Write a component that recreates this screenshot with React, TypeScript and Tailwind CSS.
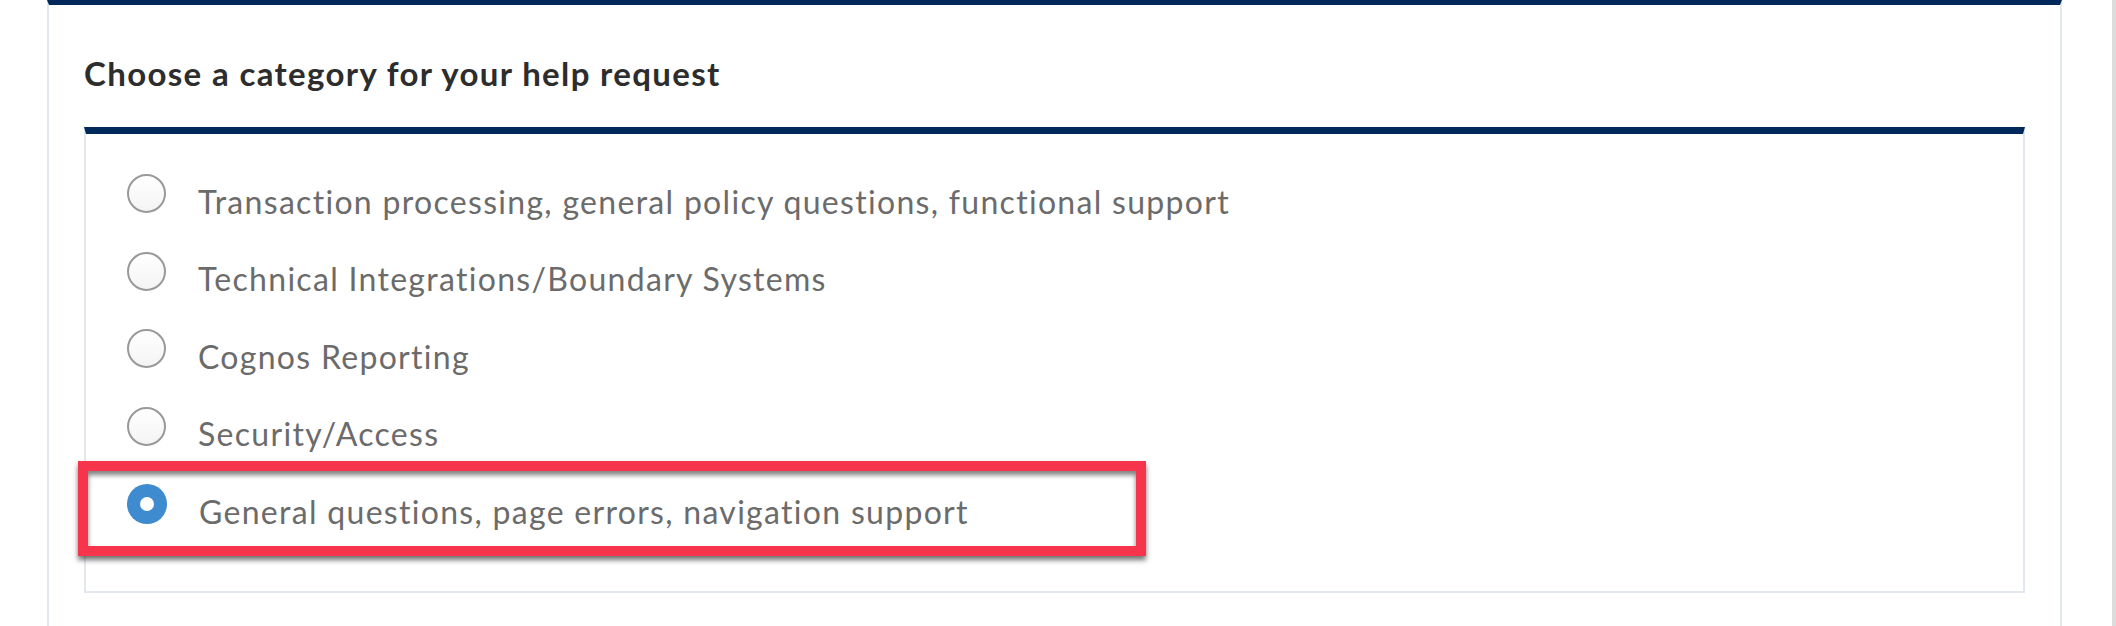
import { useState } from 'react';

const categories = [
  'Transaction processing, general policy questions, functional support',
  'Technical Integrations/Boundary Systems',
  'Cognos Reporting',
  'Security/Access',
  'General questions, page errors, navigation support',
];

function Radio({ checked }: { checked: boolean }) {
  return checked ? (
    <span className="flex h-[40px] w-[40px] shrink-0 items-center justify-center rounded-full bg-[#3f8bcf]">
      <span className="h-[14px] w-[14px] rounded-full bg-white" />
    </span>
  ) : (
    <span className="block h-[39px] w-[39px] shrink-0 rounded-full border-2 border-[#999999] bg-gradient-to-b from-white to-[#f4f4f4]" />
  );
}

export default function App() {
  const [selected, setSelected] = useState(4);

  return (
    <div className="relative min-h-screen bg-white font-['Lato','Liberation_Sans',sans-serif]">
      <div className="ml-[47px] w-[2015px] border-x-2 border-t-[5px] border-x-[#e3e7ee] border-t-[#00285a] px-[35px] pt-[48px] pb-[40px]">
        <h2 className="text-[33px] font-bold leading-[40px] tracking-[1.35px] text-[#2d2d2d]">
          Choose a category for your help request
        </h2>

        <div className="mt-[34px] h-[466px] border-2 border-t-[7px] border-[#e3e7ee] border-t-[#00285a] pt-[21px] pl-[41px]">
          {categories.map((label, i) => (
            <label
              key={label}
              onClick={() => setSelected(i)}
              className="relative flex h-[77.5px] cursor-pointer items-center gap-[32px]"
            >
              <Radio checked={selected === i} />
              <span className="translate-y-[8px] text-[32px] leading-[40px] tracking-[1.3px] text-[#6b6b6b]">
                {label}
              </span>
              {i === 4 && (
                <span className="pointer-events-none absolute top-[-4px] left-[-49px] h-[95px] w-[1068px] border-[10px] border-[#f6344b] shadow-[0_4px_5px_rgba(0,0,0,0.55),inset_0_4px_5px_rgba(0,0,0,0.5)]" />
              )}
            </label>
          ))}
        </div>
      </div>

      <div className="absolute top-0 right-0 h-full w-[4px] bg-[#dcdcdc]" />
    </div>
  );
}
